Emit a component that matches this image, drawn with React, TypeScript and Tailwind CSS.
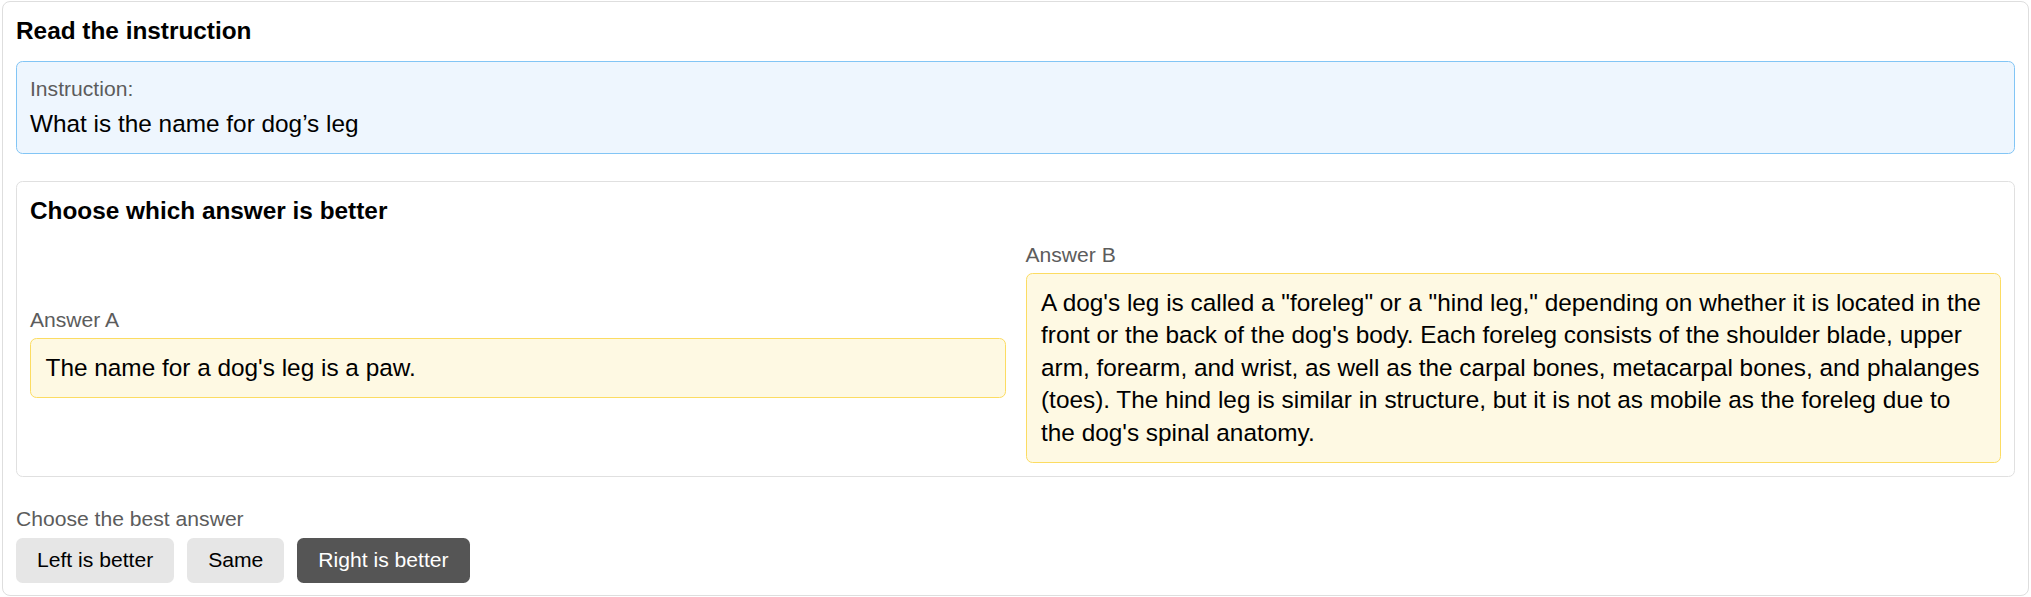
import React from "react";

const font = { fontFamily: '"Liberation Sans", Arial, sans-serif' };

function Label({ children }: { children: React.ReactNode }) {
  return (
    <div className="text-[21.125px] leading-[28px] text-[#5c5c5c] mb-[4.5px]">{children}</div>
  );
}

function AnswerBox({ children }: { children: React.ReactNode }) {
  return (
    <div className="border border-[#fcdc62] bg-[#fef9e3] rounded-[6.5px] px-[14.5px] py-[12.75px] text-[24.375px] leading-[32.5px] text-black">
      {children}
    </div>
  );
}

export default function App() {
  return (
    <div className="bg-white w-[2031px] h-[597px] pl-[2px] pt-[1px]" style={font}>
      <div className="w-[2027px] border border-[#dedede] rounded-[8px] px-[13px] pt-[13px] pb-[12px]">
        <div className="text-[24.375px] leading-[32.5px] font-bold text-black">Read the instruction</div>

        <div className="mt-[13.5px] border border-[#82c5f5] bg-[#eef6fe] rounded-[6.5px] px-[13px] py-[13px]">
          <Label>Instruction:</Label>
          <div className="text-[24.375px] leading-[32.5px] text-black">What is the name for dog’s leg</div>
        </div>

        <div className="mt-[27px] border border-[#e0e0e0] rounded-[6.5px] p-[13px]">
          <div className="text-[24.375px] leading-[32.5px] font-bold text-black">Choose which answer is better</div>
          <div className="mt-[13px] grid grid-cols-2 gap-x-[20px] items-center">
            <div>
              <Label>Answer A</Label>
              <AnswerBox>The name for a dog's leg is a paw.</AnswerBox>
            </div>
            <div>
              <Label>Answer B</Label>
              <AnswerBox>
                <span className="whitespace-nowrap">
                  A dog's leg is called a "foreleg" or a "hind leg," depending on whether it is located in the
                  <br />
                  front or the back of the dog's body. Each foreleg consists of the shoulder blade, upper
                  <br />
                  arm, forearm, and wrist, as well as the carpal bones, metacarpal bones, and phalanges
                  <br />
                  (toes). The hind leg is similar in structure, but it is not as mobile as the foreleg due to
                  <br />
                  the dog's spinal anatomy.
                </span>
              </AnswerBox>
            </div>
          </div>
        </div>

        <div className="mt-[28px]">
          <Label>Choose the best answer</Label>
          <div className="flex gap-[13px]">
            <button className="h-[45.5px] px-[21px] rounded-[6.5px] bg-[#e6e6e6] text-black text-[21.125px]">Left is better</button>
            <button className="h-[45.5px] px-[21px] rounded-[6.5px] bg-[#e6e6e6] text-black text-[21.125px]">Same</button>
            <button className="h-[45.5px] px-[21px] rounded-[6.5px] bg-[#555555] text-white text-[21.125px]">Right is better</button>
          </div>
        </div>
      </div>
    </div>
  );
}
